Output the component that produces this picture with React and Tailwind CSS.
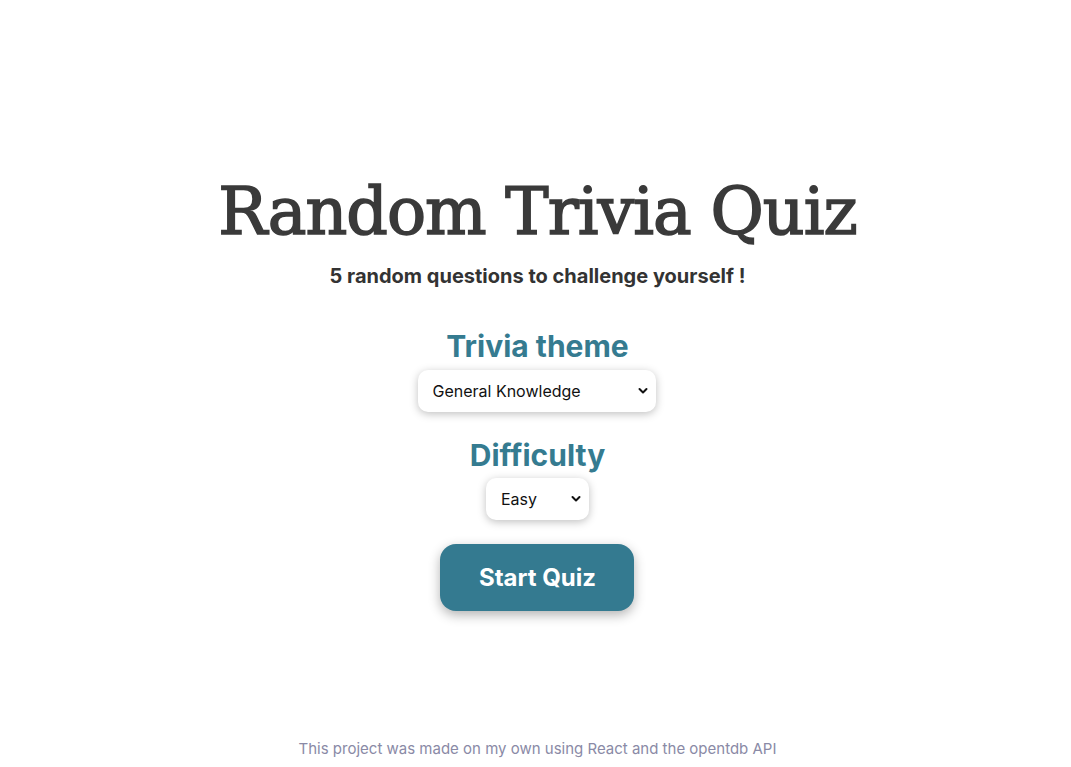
import React, { useState } from 'react';

const Chevron = () => (
  <svg
    className="pointer-events-none absolute right-[8px] top-1/2 -translate-y-1/2"
    width="10"
    height="7"
    viewBox="0 0 10 7"
    fill="none"
  >
    <path d="M1.5 1.5L5 5L8.5 1.5" stroke="#111" strokeWidth="2" strokeLinecap="round" strokeLinejoin="round" />
  </svg>
);

const App = () => {
  const [theme, setTheme] = useState('9');
  const [difficulty, setDifficulty] = useState('easy');

  return (
    <div className="min-h-screen bg-white flex flex-col items-center pl-[4px] font-['Inter','Noto_Sans',sans-serif]">
      {/* Main */}
      <main className="flex flex-col items-center pt-[170px]">
        <h1 className="font-['DejaVu_Serif','Liberation_Serif',serif] text-[65px] leading-[84px] text-[#3a3a3a] tracking-[-1px] [-webkit-text-stroke:1.6px_#3a3a3a]">
          Random Trivia Quiz
        </h1>
        <p className="mt-[8px] text-[20px] font-bold text-[#333] leading-[28px]">
          5 random questions to challenge yourself !
        </p>

        <h2 className="mt-[38px] text-[30px] font-bold text-[#357b90] leading-[36px]">Trivia theme</h2>
        <div className="relative mt-[6px]">
          <select
            value={theme}
            onChange={(e) => setTheme(e.target.value)}
            className="appearance-none w-[238px] h-[42px] rounded-[10px] bg-white pl-[14px] pr-[30px] text-[16px] text-[#111] shadow-[0_2px_8px_rgba(0,0,0,0.25)] outline-none"
          >
            <option value="9">General Knowledge</option>
            <option value="10">Entertainment: Books</option>
            <option value="11">Entertainment: Film</option>
            <option value="17">Science &amp; Nature</option>
          </select>
          <Chevron />
        </div>

        <h2 className="mt-[25px] text-[30px] font-bold text-[#357b90] leading-[36px]">Difficulty</h2>
        <div className="relative mt-[5px]">
          <select
            value={difficulty}
            onChange={(e) => setDifficulty(e.target.value)}
            className="appearance-none w-[103px] h-[42px] rounded-[10px] bg-white pl-[15px] pr-[24px] text-[16px] text-[#111] shadow-[0_2px_8px_rgba(0,0,0,0.25)] outline-none"
          >
            <option value="easy">Easy</option>
            <option value="medium">Medium</option>
            <option value="hard">Hard</option>
          </select>
          <Chevron />
        </div>

        <button className="mt-[24px] w-[194px] h-[67px] rounded-[16px] bg-[#347a90] text-white text-[24px] font-bold shadow-[0_4px_12px_rgba(0,0,0,0.3)]">
          Start Quiz
        </button>
      </main>

      {/* Footer */}
      <footer className="mt-auto pb-[8px] text-[15px] text-[#8a8aa6] leading-[20px]">
        This project was made on my own using React and the opentdb API
      </footer>
    </div>
  );
};

export default App;
